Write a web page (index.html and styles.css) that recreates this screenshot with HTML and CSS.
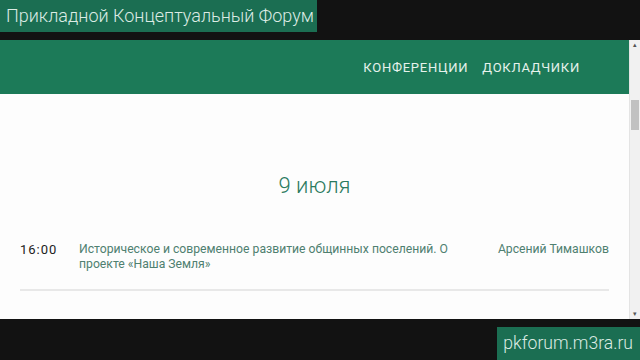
FILE: index.html
```html
<!DOCTYPE html>
<html lang="ru">
<head>
    <meta charset="UTF-8">
    <title>Прикладной Концептуальный Форум</title>
    <link rel="stylesheet" href="styles.css">
</head>
<body>
    <div class="caption-top">Прикладной Концептуальный Форум</div>

    <div class="browser">
        <div class="page">
            <header class="site-header">
                <nav class="site-nav">
                    <a href="#">Конференции</a>
                    <a href="#">Докладчики</a>
                </nav>
            </header>
            <main class="schedule">
                <h2 class="day-title">9 июля</h2>
                <div class="talk">
                    <div class="talk-time">16:00</div>
                    <div class="talk-title">Историческое и современное развитие общинных поселений. О проекте «Наша Земля»</div>
                    <div class="talk-speaker">Арсений Тимашков</div>
                </div>
            </main>
        </div>
        <div class="scrollbar">
            <div class="scroll-arrow">&#9652;</div>
            <div class="scroll-track"><div class="scroll-thumb"></div></div>
            <div class="scroll-arrow">&#9662;</div>
        </div>
    </div>

    <div class="caption-bottom">
        <div class="caption-url">pkforum.m3ra.ru</div>
    </div>
</body>
</html>
```

FILE: styles.css
```css
body {
    margin: 0;
    width: 640px;
    height: 360px;
    background-color: #121212;
    font-family: Roboto, "Noto Sans", sans-serif;
    overflow: hidden;
    display: flex;
    flex-direction: column;
}
.caption-top {
    align-self: flex-start;
    background-color: #1b6e52;
    color: #dcebe4;
    font-size: 18px;
    font-weight: 300;
    line-height: 32px;
    height: 32px;
    padding: 0 3px 0 6px;
}
.browser {
    margin-top: 8px;
    height: 279px;
    display: flex;
    background-color: #fdfdfd;
}
.page {
    flex: 1;
    display: flex;
    flex-direction: column;
}
.site-header {
    height: 54px;
    background-color: #1c7a58;
    display: flex;
    justify-content: flex-end;
    align-items: center;
    padding-right: 49px;
}
.site-nav {
    display: flex;
    gap: 14px;
    margin-top: 1px;
}
.site-nav a {
    color: #e6f2ec;
    text-decoration: none;
    text-transform: uppercase;
    font-size: 13px;
    font-weight: 400;
    letter-spacing: 0.75px;
}
.schedule {
    padding: 0 20px;
}
.day-title {
    margin: 78px 0 0;
    text-align: center;
    font-size: 22px;
    font-weight: 300;
    color: #2a7a5e;
    line-height: 28px;
}
.talk {
    display: flex;
    align-items: flex-start;
    margin-top: 42px;
    padding-bottom: 17px;
    border-bottom: 2px solid #e8e8e8;
    font-size: 12.2px;
    line-height: 15px;
}
.talk-time {
    width: 59px;
    color: #222;
    font-size: 13px;
    font-weight: 400;
    letter-spacing: 1px;
}
.talk-title {
    flex: 1;
    color: #4f8070;
    padding-right: 40px;
}
.talk-speaker {
    color: #4f8070;
    white-space: nowrap;
}
.scrollbar {
    width: 10px;
    background-color: #f1f1f1;
    border-left: 1px solid #e4e4e4;
    display: flex;
    flex-direction: column;
    align-items: center;
}
.scroll-arrow {
    font-size: 7px;
    line-height: 10px;
    color: #555;
}
.scroll-track {
    flex: 1;
    width: 100%;
}
.scroll-thumb {
    margin: 50px 1px 0;
    height: 30px;
    background-color: #c1c1c1;
}
.caption-bottom {
    margin-top: 8px;
    display: flex;
    justify-content: flex-end;
}
.caption-url {
    background-color: #1b6e52;
    color: #dcebe4;
    font-size: 17.6px;
    font-weight: 300;
    line-height: 33px;
    height: 33px;
    padding: 0 7px 0 6px;
}
```
